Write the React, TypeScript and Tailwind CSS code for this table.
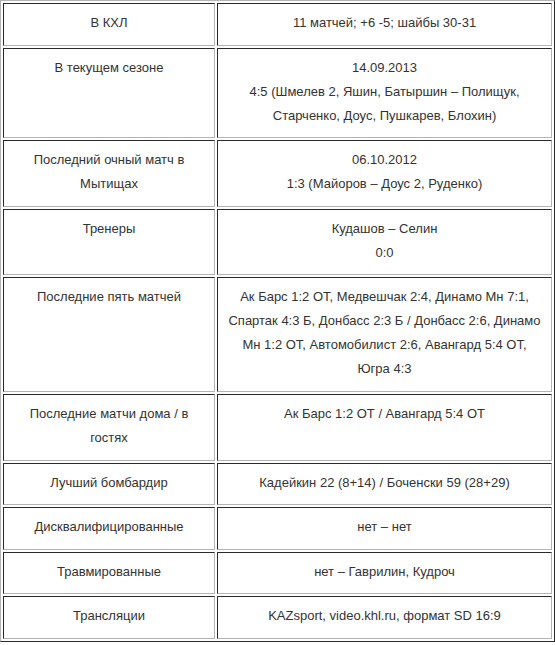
import React from "react";

const rows: { label: React.ReactNode; value: React.ReactNode }[] = [
  { label: "В КХЛ", value: "11 матчей; +6 -5; шайбы 30-31" },
  {
    label: "В текущем сезоне",
    value: (
      <>
        14.09.2013
        <br />
        4:5 (Шмелев 2, Яшин, Батыршин – Полищук,
        <br />
        Старченко, Доус, Пушкарев, Блохин)
      </>
    ),
  },
  {
    label: (
      <>
        Последний очный матч в
        <br />
        Мытищах
      </>
    ),
    value: (
      <>
        06.10.2012
        <br />
        1:3 (Майоров – Доус 2, Руденко)
      </>
    ),
  },
  {
    label: "Тренеры",
    value: (
      <>
        Кудашов – Селин
        <br />
        0:0
      </>
    ),
  },
  {
    label: "Последние пять матчей",
    value: (
      <>
        Ак Барс 1:2 ОТ, Медвешчак 2:4, Динамо Мн 7:1,
        <br />
        Спартак 4:3 Б, Донбасс 2:3 Б / Донбасс 2:6, Динамо
        <br />
        Мн 1:2 ОТ, Автомобилист 2:6, Авангард 5:4 ОТ,
        <br />
        Югра 4:3
      </>
    ),
  },
  {
    label: (
      <>
        Последние матчи дома / в
        <br />
        гостях
      </>
    ),
    value: "Ак Барс 1:2 ОТ / Авангард 5:4 ОТ",
  },
  { label: "Лучший бомбардир", value: "Кадейкин 22 (8+14) / Боченски 59 (28+29)" },
  { label: "Дисквалифицированные", value: "нет – нет" },
  { label: "Травмированные", value: "нет – Гаврилин, Кудроч" },
  { label: "Трансляции", value: "KAZsport, video.khl.ru, формат SD 16:9" },
];

// old-style table border="1": inset cells inside an outset table
const cell =
  "border border-t-[#2a2a2a] border-l-[#2a2a2a] border-r-[#b4b4b4] border-b-[#b4b4b4] px-2 pt-[7px] pb-[9.6px] text-center align-top leading-[24px]";

export default function App() {
  return (
    <div className="w-[555px] h-[645px] bg-white overflow-hidden">
      <table
        className="w-[555px] table-fixed border-separate border-spacing-[2px] border border-t-[#b4b4b4] border-l-[#b4b4b4] border-r-[#2a2a2a] border-b-[#2a2a2a] text-[13px] text-[#333]"
        style={{ fontFamily: '"Liberation Sans", Arial, sans-serif' }}
      >
        <colgroup>
          <col className="w-[212px]" />
          <col />
        </colgroup>
        <tbody>
          {rows.map((r, i) => (
            <tr key={i}>
              <td className={cell}>{r.label}</td>
              <td className={cell}>{r.value}</td>
            </tr>
          ))}
        </tbody>
      </table>
    </div>
  );
}
